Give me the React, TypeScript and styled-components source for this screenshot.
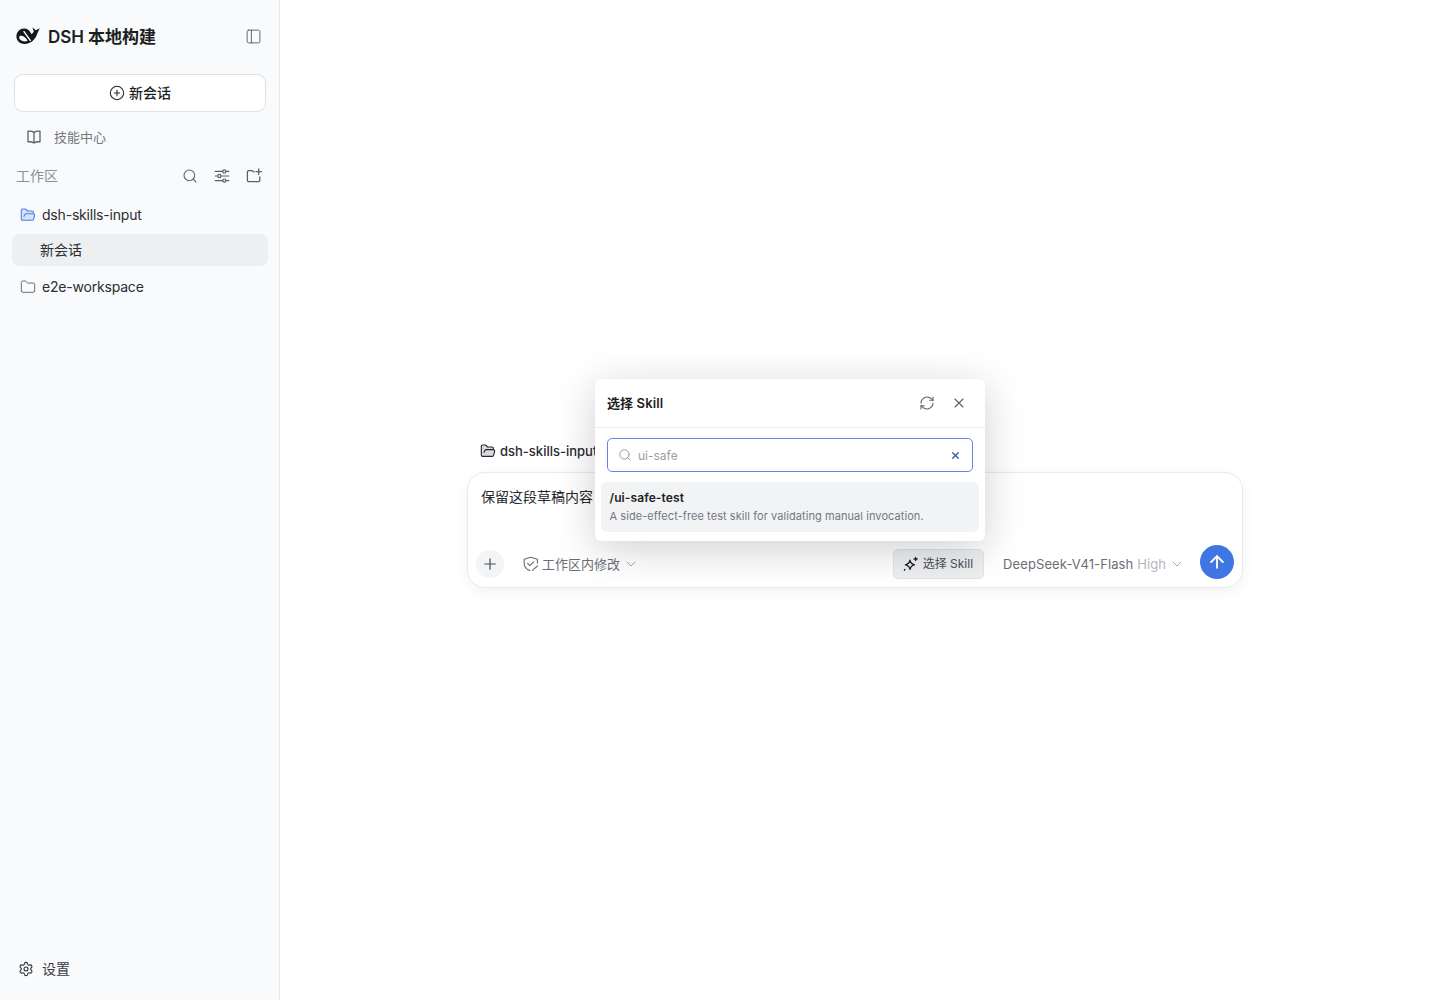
import styled, { createGlobalStyle } from 'styled-components';
import {
  ArrowUp,
  ChevronDown,
  CirclePlus,
  Folder,
  FolderOpen,
  PanelLeft,
  Plus,
  RefreshCw,
  Search,
  Settings,
  X,
} from 'lucide-react';

const FONT = `Inter, "Noto Sans CJK SC", "Noto Sans", sans-serif`;

const GlobalStyle = createGlobalStyle`
  html, body {
    margin: 0;
    padding: 0;
    background: #fff;
    font-family: ${FONT};
    line-height: 20px;
    -webkit-font-smoothing: antialiased;
  }
  * { box-sizing: border-box; }
`;

const WhaleLogo = () => (
  <svg width='24' height='18' viewBox='0 0 24 18' fill='none'>
    <path
      d='M.4 9.6C.4 4.6 4 1.4 8 1.4c3 0 5 1.4 6.2 3.6l1.4 2.2 2.2-2.4L16.4.3l3.4 3 4-2-2.4 5c-1 3.2-2.4 5.6-4.8 7.7-2 1.8-5 2.9-8 2.9C4 17 .4 14.1.4 9.6Z'
      fill='#14161a'
    />
    <path d='M3.6 9c2.8-.6 5.8.8 8 4.8-2.8 1.2-5.8.6-7.6-1.2-.8-1-1-3-.4-3.6Z' fill='#f9fafc' />
    <path d='M8 4.6l6.2 8.8' stroke='#f9fafc' strokeWidth='1.5' strokeLinecap='round' />
  </svg>
);

const BookIcon = () => (
  <svg width='16' height='16' viewBox='0 0 16 16' fill='none' stroke='currentColor' strokeWidth='1.3' strokeLinejoin='round'>
    <path d='M8 3.4C6.5 2.4 4.5 2 2 2.2v10.6c2.5-.2 4.5.2 6 1.2 1.5-1 3.5-1.4 6-1.2V2.2c-2.5-.2-4.5.2-6 1.2Z' />
    <path d='M8 3.4V14' />
  </svg>
);

const SlidersIcon = () => (
  <svg width='16' height='16' viewBox='0 0 16 16' fill='none' stroke='currentColor' strokeWidth='1.2' strokeLinecap='round'>
    <path d='M1.2 3.4h7.4M12 3.4h2.8M1.2 8h2.4M7 8h7.8M1.2 12.6h7.4M12 12.6h2.8' />
    <circle cx='10.3' cy='3.4' r='1.6' />
    <circle cx='5.3' cy='8' r='1.6' />
    <circle cx='10.3' cy='12.6' r='1.6' />
  </svg>
);

const ShieldEdit = () => (
  <svg width='16' height='16' viewBox='0 0 16 16' fill='none' stroke='currentColor' strokeWidth='1.15' strokeLinecap='round' strokeLinejoin='round'>
    <path d='M14.4 7V3.2L7.8 1.2 1.2 3.2v4.2c0 3.4 2.4 5.8 5.6 7.2' />
    <path d='M4.6 7.4l2.2 2.2 4-3.8' />
    <path d='M9.4 14.4l5-4.4' />
  </svg>
);

const SparkIcon = () => (
  <svg width='16' height='16' viewBox='0 0 16 16' fill='none' stroke='currentColor' strokeWidth='1.3' strokeLinejoin='round' strokeLinecap='round'>
    <path d='M7 4.2c.5 2.7 1.7 4 4.4 4.6-2.7.5-3.9 1.8-4.4 4.6-.5-2.8-1.8-4.1-4.6-4.6 2.8-.6 4.1-1.9 4.6-4.6Z' />
    <path d='M12.6 1.4v3.2M11 3h3.2' />
    <path d='M2 13.4l-.6.8' />
  </svg>
);

const NewFolderIcon = () => (
  <svg width='16' height='16' viewBox='0 0 16 16' fill='none' stroke='currentColor' strokeWidth='1.3' strokeLinecap='round' strokeLinejoin='round'>
    <path d='M8.2 3.8H7.4L6 2.6H2.8A1.4 1.4 0 0 0 1.4 4v8.2a1.4 1.4 0 0 0 1.4 1.4h9.6a1.4 1.4 0 0 0 1.4-1.4V8.8' />
    <path d='M12.7 1v5.4M10 3.7h5.4' />
  </svg>
);

const Page = styled.div`
  display: flex;
  width: 1440px;
  height: 1000px;
  overflow: hidden;
  background: #fff;
`;

const Sidebar = styled.aside`
  display: flex;
  flex-direction: column;
  width: 280px;
  flex-shrink: 0;
  padding: 0 11px 0 12px;
  background: #f9fafc;
  border-right: 1px solid #e8e9ec;
`;

const Brand = styled.div`
  display: flex;
  align-items: center;
  height: 72px;
  padding-left: 4px;
`;

const BrandName = styled.div`
  flex: 1;
  margin: 1px 0 0 8px;
  font-size: 17px;
  font-weight: 600;
  letter-spacing: -0.05px;
  color: #1c1e22;
`;

const IconSlot = styled.span<{ $color?: string }>`
  display: inline-flex;
  align-items: center;
  justify-content: center;
  flex-shrink: 0;
  color: ${({ $color }) => $color || '#5c6068'};
`;

const PanelToggle = styled(IconSlot)`
  margin-right: 6px;
`;

const NewChatButton = styled.div`
  display: flex;
  align-items: center;
  justify-content: center;
  gap: 4px;
  width: 252px;
  height: 38px;
  margin: 2px 0 0 2px;
  background: #fff;
  border: 1px solid #dfe1e5;
  border-radius: 9px;
  font-size: 14px;
  font-weight: 500;
  color: #1c1e22;
`;

const SkillCenter = styled.div`
  display: flex;
  align-items: center;
  gap: 12px;
  height: 32px;
  margin-top: 9px;
  padding-left: 14px;
  font-size: 13px;
  color: #74787f;
`;

const SectionHeader = styled.div`
  display: flex;
  align-items: center;
  height: 32px;
  margin-top: 7px;
  padding: 0 6px 0 4px;
`;

const SectionTitle = styled.div`
  flex: 1;
  font-size: 14px;
  color: #8b8f96;
`;

const SectionActions = styled.div`
  display: flex;
  align-items: center;
  gap: 16px;
`;

const WorkspaceRow = styled.div<{ $first?: boolean }>`
  display: flex;
  align-items: center;
  gap: 6px;
  height: 32px;
  margin-top: ${({ $first }) => ($first ? '7px' : '5px')};
  padding-left: 8px;
  font-size: 14px;
  letter-spacing: -0.2px;
  color: #2a2d32;
`;

const SessionRow = styled.div`
  display: flex;
  align-items: center;
  height: 32px;
  margin-top: 3px;
  padding-left: 28px;
  background: #eeeff1;
  border-radius: 8px;
  font-size: 14px;
  color: #2a2d32;
`;

const SidebarFooter = styled.div`
  display: flex;
  align-items: center;
  gap: 8px;
  height: 32px;
  margin-top: auto;
  margin-bottom: 15px;
  padding-left: 6px;
  font-size: 14px;
  color: #3a3d43;
`;

const Main = styled.main`
  flex: 1;
  padding: 441px 0 0 187px;
`;

const ComposerArea = styled.div`
  position: relative;
  width: 776px;
`;

const RepoTag = styled.div`
  display: flex;
  align-items: center;
  gap: 4px;
  height: 20px;
  margin: 0 0 11px 13px;
  font-size: 13px;
  font-weight: 500;
  color: #26282d;
`;

const Composer = styled.div`
  display: flex;
  flex-direction: column;
  height: 116px;
  padding: 14px 8px 8px 13px;
  background: #fff;
  border: 1px solid #e9eaed;
  border-radius: 18px;
  box-shadow: 0 4px 14px rgba(20, 24, 32, 0.05);
`;

const Draft = styled.div`
  flex: 1;
  font-size: 14px;
  line-height: 20px;
  color: #26282d;
`;

const ComposerBar = styled.div`
  display: flex;
  align-items: center;
  height: 34px;
  margin-left: -5px;
`;

const AddButton = styled.div`
  display: flex;
  align-items: center;
  justify-content: center;
  width: 28px;
  height: 28px;
  margin-top: 4px;
  background: #f3f4f6;
  border-radius: 50%;
  color: #4a4d53;
`;

const Permission = styled.div`
  display: flex;
  flex: 1;
  align-items: center;
  gap: 3px;
  margin: 4px 0 0 19px;
  font-size: 13px;
  color: #6a6e75;
`;

const SkillButton = styled.div`
  display: flex;
  align-items: center;
  gap: 4px;
  height: 30px;
  margin-top: 3px;
  padding: 0 10px 0 9px;
  background: #eceef0;
  border: 1px solid #e2e4e7;
  border-radius: 5px;
  font-size: 12px;
  color: #4a4d53;
`;

const ModelPicker = styled.div`
  display: flex;
  align-items: center;
  gap: 3px;
  margin: 4px 15px 0 19px;
  font-size: 13px;
  letter-spacing: 0.1px;
  color: #6a6e75;
`;

const ModelLevel = styled.span`
  color: #b3b6bb;
`;

const SendButton = styled.div`
  display: flex;
  align-items: center;
  justify-content: center;
  width: 34px;
  height: 34px;
  background: #3f76e4;
  border-radius: 50%;
  color: #fff;
`;

const SkillPopup = styled.div`
  position: absolute;
  top: -62px;
  left: 128px;
  width: 390px;
  height: 162px;
  background: #fff;
  border-radius: 6px;
  box-shadow: 0 8px 40px rgba(15, 20, 30, 0.2);
`;

const PopupHeader = styled.div`
  display: flex;
  align-items: center;
  gap: 16px;
  height: 49px;
  padding: 0 18px 0 12px;
  border-bottom: 1px solid #f0f1f3;
`;

const PopupTitle = styled.div`
  flex: 1;
  font-size: 13px;
  font-weight: 600;
  letter-spacing: 0.1px;
  color: #1c1e22;
`;

const SearchBox = styled.div`
  display: flex;
  align-items: center;
  gap: 6px;
  height: 34px;
  margin: 10px 12px;
  padding: 0 11px 0 10px;
  border: 1px solid #6b7ff0;
  border-radius: 5px;
  font-size: 12px;
  color: #9a9ea5;
`;

const SearchText = styled.div`
  flex: 1;
  padding-top: 1px;
`;

const SkillOption = styled.div`
  height: 50px;
  margin: 0 6px;
  padding: 8px 8px 8px 8.5px;
  background: #f2f3f5;
  border-radius: 6px;
`;

const SkillName = styled.div`
  font-size: 12px;
  line-height: 15px;
  font-weight: 600;
  letter-spacing: 0.1px;
  color: #1c1e22;
`;

const SkillDescription = styled.div`
  margin-top: 4px;
  font-size: 11px;
  line-height: 14px;
  letter-spacing: 0.07px;
  color: #73777e;
  white-space: nowrap;
`;

const App = () => (
  <Page>
    <GlobalStyle />
    <Sidebar>
      <Brand>
        <WhaleLogo />
        <BrandName>DSH 本地构建</BrandName>
        <PanelToggle $color='#62666d'><PanelLeft size={17} strokeWidth={1.4} /></PanelToggle>
      </Brand>
      <NewChatButton>
        <IconSlot $color='#26282d'><CirclePlus size={16} strokeWidth={1.6} /></IconSlot>
        新会话
      </NewChatButton>
      <SkillCenter>
        <IconSlot><BookIcon /></IconSlot>
        技能中心
      </SkillCenter>
      <SectionHeader>
        <SectionTitle>工作区</SectionTitle>
        <SectionActions>
          <IconSlot><Search size={16} strokeWidth={1.6} /></IconSlot>
          <IconSlot><SlidersIcon /></IconSlot>
          <IconSlot><NewFolderIcon /></IconSlot>
        </SectionActions>
      </SectionHeader>
      <WorkspaceRow $first>
        <IconSlot $color='#4a7fe8'><FolderOpen size={16} strokeWidth={1.6} fill='#d3e1fb' /></IconSlot>
        dsh-skills-input
      </WorkspaceRow>
      <SessionRow>新会话</SessionRow>
      <WorkspaceRow>
        <IconSlot $color='#6a6e75'><Folder size={16} strokeWidth={1.5} /></IconSlot>
        e2e-workspace
      </WorkspaceRow>
      <SidebarFooter>
        <IconSlot $color='#2a2d32'><Settings size={16} strokeWidth={1.6} /></IconSlot>
        设置
      </SidebarFooter>
    </Sidebar>
    <Main>
      <ComposerArea>
        <RepoTag>
          <IconSlot $color='#26282d'><FolderOpen size={16} strokeWidth={1.7} fill='#d8dade' /></IconSlot>
          dsh-skills-input
        </RepoTag>
        <Composer>
          <Draft>保留这段草稿内容</Draft>
          <ComposerBar>
            <AddButton><Plus size={18} strokeWidth={1.6} /></AddButton>
            <Permission>
              <IconSlot $color='#6a6e75'><ShieldEdit /></IconSlot>
              工作区内修改
              <IconSlot $color='#a0a3a9'><ChevronDown size={16} strokeWidth={1.4} /></IconSlot>
            </Permission>
            <SkillButton>
              <IconSlot $color='#1c1e22'><SparkIcon /></IconSlot>
              选择 Skill
            </SkillButton>
            <ModelPicker>
              <span>DeepSeek-V41-Flash <ModelLevel>High</ModelLevel></span>
              <IconSlot $color='#a0a3a9'><ChevronDown size={16} strokeWidth={1.4} /></IconSlot>
            </ModelPicker>
            <SendButton><ArrowUp size={20} strokeWidth={2.2} /></SendButton>
          </ComposerBar>
        </Composer>
        <SkillPopup>
          <PopupHeader>
            <PopupTitle>选择 Skill</PopupTitle>
            <IconSlot><RefreshCw size={16} strokeWidth={1.6} /></IconSlot>
            <IconSlot><X size={16} strokeWidth={1.6} /></IconSlot>
          </PopupHeader>
          <SearchBox>
            <IconSlot $color='#8b8f96'><Search size={14} strokeWidth={1.5} /></IconSlot>
            <SearchText>ui-safe</SearchText>
            <IconSlot $color='#3f64b0'><X size={11} strokeWidth={3.2} /></IconSlot>
          </SearchBox>
          <SkillOption>
            <SkillName>/ui-safe-test</SkillName>
            <SkillDescription>A side-effect-free test skill for validating manual invocation.</SkillDescription>
          </SkillOption>
        </SkillPopup>
      </ComposerArea>
    </Main>
  </Page>
);

export default App;
